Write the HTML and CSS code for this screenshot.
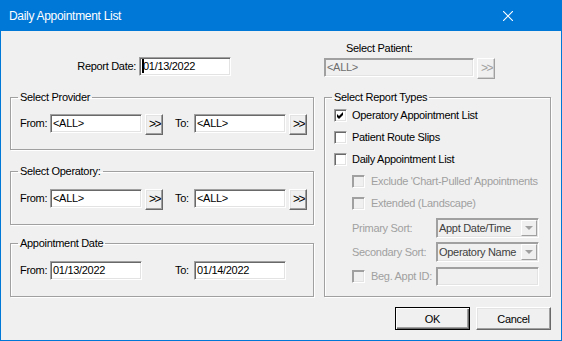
FILE: index.html
```html
<!DOCTYPE html>
<html>
<head>
  <title>Daily Appointment List</title>
  <link rel="stylesheet" href="styles.css">
</head>
<body>
  <div class="dialog">
    <div class="titlebar">
      <span class="title">Daily Appointment List</span>
      <svg class="close" width="10" height="10" viewBox="0 0 10 10">
        <path d="M0 0 L10 10 M10 0 L0 10" stroke="#fff" stroke-width="1.1" fill="none"/>
      </svg>
    </div>

    <div class="content">
      <!-- REPORT DATE & PATIENT -->
      <div class="top-row">
        <div class="report-date">
          <span class="field-label">Report Date:</span>
          <div class="textbox"><span class="caret"></span>01/13/2022</div>
        </div>
        <div class="patient">
          <div class="patient-label">Select Patient:</div>
          <div class="picker">
            <div class="textbox textbox-patient disabled">&lt;ALL&gt;</div>
            <button class="more-btn" disabled>&gt;&gt;</button>
          </div>
        </div>
      </div>

      <div class="columns">
        <div class="left-col">
          <!-- Provider range -->
          <fieldset class="group group-provider">
            <legend>Select Provider</legend>
            <div class="field-row">
              <div class="range-field">
                <span class="range-label">From:</span>
                <div class="textbox">&lt;ALL&gt;</div>
                <button class="more-btn">&gt;&gt;</button>
              </div>
              <div class="range-field">
                <span class="range-label range-label-to">To:</span>
                <div class="textbox">&lt;ALL&gt;</div>
                <button class="more-btn">&gt;&gt;</button>
              </div>
            </div>
          </fieldset>

          <!-- Operatory range -->
          <fieldset class="group group-operatory">
            <legend>Select Operatory:</legend>
            <div class="field-row">
              <div class="range-field">
                <span class="range-label">From:</span>
                <div class="textbox">&lt;ALL&gt;</div>
                <button class="more-btn">&gt;&gt;</button>
              </div>
              <div class="range-field">
                <span class="range-label range-label-to">To:</span>
                <div class="textbox">&lt;ALL&gt;</div>
                <button class="more-btn">&gt;&gt;</button>
              </div>
            </div>
          </fieldset>

          <!-- Appointment date range -->
          <fieldset class="group group-date">
            <legend>Appointment Date</legend>
            <div class="field-row">
              <div class="range-field">
                <span class="range-label">From:</span>
                <div class="textbox">01/13/2022</div>
              </div>
              <div class="range-field">
                <span class="range-label range-label-to">To:</span>
                <div class="textbox">01/14/2022</div>
              </div>
            </div>
          </fieldset>
        </div>

        <!-- REPORT TYPES -->
        <fieldset class="group group-types">
          <legend>Select Report Types</legend>
          <div class="check-row">
            <span class="checkbox checked">
              <svg width="11" height="11" viewBox="0 0 11 11"><polygon points="2,4 4,6 8,2 8,5 4,9 2,7" fill="#000"/></svg>
            </span>
            Operatory Appointment List
          </div>
          <div class="check-row"><span class="checkbox"></span>Patient Route Slips</div>
          <div class="check-row"><span class="checkbox"></span>Daily Appointment List</div>

          <div class="sub-options">
            <div class="check-row disabled"><span class="checkbox"></span>Exclude 'Chart-Pulled' Appointments</div>
            <div class="check-row disabled"><span class="checkbox"></span>Extended (Landscape)</div>
            <div class="sort-block">
              <div class="sort-row">
                <span class="sort-label">Primary Sort:</span>
                <div class="combo"><span class="combo-text">Appt Date/Time</span><span class="combo-arrow"></span></div>
              </div>
              <div class="sort-row">
                <span class="sort-label">Secondary Sort:</span>
                <div class="combo"><span class="combo-text">Operatory Name</span><span class="combo-arrow"></span></div>
              </div>
              <div class="sort-row">
                <span class="sort-label"><span class="checkbox"></span>Beg. Appt ID:</span>
                <div class="textbox textbox-wide disabled"></div>
              </div>
            </div>
          </div>
        </fieldset>
      </div>

      <div class="actions">
        <button class="dlg-btn default">OK</button>
        <button class="dlg-btn">Cancel</button>
      </div>
    </div>
  </div>
</body>
</html>
```

FILE: styles.css
```css
body {
  margin: 0;
  font-family: "Liberation Sans", Arial, sans-serif;
  font-size: 11px;
  letter-spacing: -0.3px;
  color: #000;
  background: #fff;
}
button { font: inherit; letter-spacing: inherit; color: inherit; }

.dialog {
  width: 562px;
  height: 341px;
  box-sizing: border-box;
  border: 1px solid #0078d7;
  border-top: 0;
  background: #f0f0f0;
  display: flex;
  flex-direction: column;
}
.titlebar {
  height: 31px;
  margin: 0 -1px;
  padding-left: 9px;
  background: #0078d7;
  color: #fff;
  display: flex;
  align-items: center;
  justify-content: space-between;
}
.title { font-size: 12px; }
.close { margin-right: 49px; }

.content {
  flex: 1;
  padding: 0 10px 0 9px;
  display: flex;
  flex-direction: column;
}

/* top row */
.top-row { display: flex; gap: 10px; height: 60px; }
.report-date {
  width: 304px;
  box-sizing: border-box;
  padding: 26px 83px 0 0;
  display: flex;
  justify-content: flex-end;
  align-items: flex-start;
}
.field-label { line-height: 19px; margin-right: 3px; }
.patient { width: 227px; padding-top: 10px; }
.patient-label { line-height: 14px; margin: 0 0 3px 22px; }
.picker { display: flex; gap: 3px; align-items: flex-start; }

/* sunken text box */
.textbox {
  width: 92px;
  height: 19px;
  box-sizing: border-box;
  padding-left: 2px;
  line-height: 17px;
  background: #fff;
  border: 1px solid;
  border-color: #a0a0a0 #fff #fff #a0a0a0;
  box-shadow: inset 1px 1px 0 #696969, inset -1px -1px 0 #e3e3e3;
  white-space: nowrap;
  flex: none;
}
.textbox.disabled {
  background: #f0f0f0;
  color: #6d6d6d;
  box-shadow: inset 1px 1px 0 #a0a0a0, inset -1px -1px 0 #e3e3e3;
}
.textbox-patient { width: 150px; }
.textbox-wide { width: 103px; }
.caret {
  display: inline-block;
  width: 2px;
  height: 14px;
  margin-right: -1px;
  vertical-align: -3px;
  background: #000;
}

/* raised buttons */
.more-btn {
  width: 18px;
  height: 21px;
  padding: 0 0 2px 1px;
  line-height: 1;
  font-size: 12px;
  letter-spacing: -1.5px;
  background: #f0f0f0;
  border: 1px solid;
  border-color: #fff #696969 #696969 #fff;
  box-shadow: inset -1px -1px 0 #a0a0a0, inset 1px 1px 0 #e3e3e3;
  flex: none;
}
.more-btn:disabled {
  color: #a0a0a0;
  border-color: #fff #a0a0a0 #a0a0a0 #fff;
  box-shadow: inset -1px -1px 0 #d0d0d0;
}

/* group boxes */
.columns { display: flex; gap: 10px; }
.left-col { width: 304px; display: flex; flex-direction: column; }
.group {
  margin: 0;
  padding: 0 9px;
  box-sizing: border-box;
  border: 1px solid #a0a0a0;
  box-shadow: inset 1px 1px 0 #fff, 1px 1px 0 #fff;
  min-width: 0;
}
.group legend {
  padding: 0 2px;
  margin-left: -2px;
  line-height: 13px;
}
.group-provider { height: 59px; }
.group-operatory { height: 60px; margin-top: 15px; }
.group-date { height: 60px; margin-top: 12px; }
.group-types { width: 227px; height: 206px; }

.field-row { display: flex; margin-top: 11px; }
.group-provider .field-row { margin-top: 10px; }
.range-field { flex: none; width: 155px; display: flex; align-items: flex-start; gap: 3px; }
.range-field + .range-field { width: auto; }
.range-label { width: 27px; line-height: 19px; flex: none; }
.range-label-to { width: 16px; }

/* checkboxes */
.check-row { height: 22px; display: flex; align-items: center; white-space: nowrap; }
.checkbox {
  width: 13px;
  height: 13px;
  box-sizing: border-box;
  margin-right: 5px;
  background: #fff;
  border: 1px solid;
  border-color: #a0a0a0 #fff #fff #a0a0a0;
  box-shadow: inset 1px 1px 0 #696969, inset -1px -1px 0 #e3e3e3;
  display: inline-flex;
  flex-shrink: 0;
}
.disabled, .sort-label { color: #a0a0a0; }
.disabled .checkbox, .sort-label .checkbox {
  background: #f0f0f0;
  box-shadow: inset 1px 1px 0 #a0a0a0, inset -1px -1px 0 #e3e3e3;
}
.sub-options { padding-left: 18px; }
.sub-options .checkbox { margin-right: 6px; }
.sort-block { margin-top: 2px; }
.sort-row { height: 24px; display: flex; align-items: center; }
.sort-label { width: 84px; display: flex; align-items: center; white-space: nowrap; }

/* disabled combo */
.combo {
  width: 103px;
  height: 20px;
  box-sizing: border-box;
  padding: 1px 1px 1px 2px;
  background: #f0f0f0;
  color: #404040;
  border: 1px solid;
  border-color: #a0a0a0 #fff #fff #a0a0a0;
  box-shadow: inset 1px 1px 0 #a0a0a0, inset -1px -1px 0 #e3e3e3;
  display: flex;
  align-items: center;
  justify-content: space-between;
}
.combo-text { white-space: nowrap; }
.combo-arrow {
  width: 16px;
  height: 16px;
  box-sizing: border-box;
  border: 1px solid;
  border-color: #fff #a0a0a0 #a0a0a0 #fff;
  position: relative;
}
.combo-arrow::after {
  content: "";
  position: absolute;
  left: 3px;
  top: 5px;
  border: 4px solid transparent;
  border-top: 4px solid #a0a0a0;
  border-bottom: 0;
}

/* dialog buttons */
.actions { display: flex; justify-content: flex-end; gap: 6px; margin-top: 10px; }
.dlg-btn {
  width: 75px;
  height: 23px;
  padding: 0;
  background: #f0f0f0;
  border: 1px solid;
  border-color: #fff #696969 #696969 #fff;
  box-shadow: inset -1px -1px 0 #a0a0a0, inset 1px 1px 0 #e3e3e3;
}
.dlg-btn.default {
  border-color: #000;
  box-shadow: inset 1px 1px 0 #fff, inset -1px -1px 0 #696969, inset -2px -2px 0 #a0a0a0;
}
```
